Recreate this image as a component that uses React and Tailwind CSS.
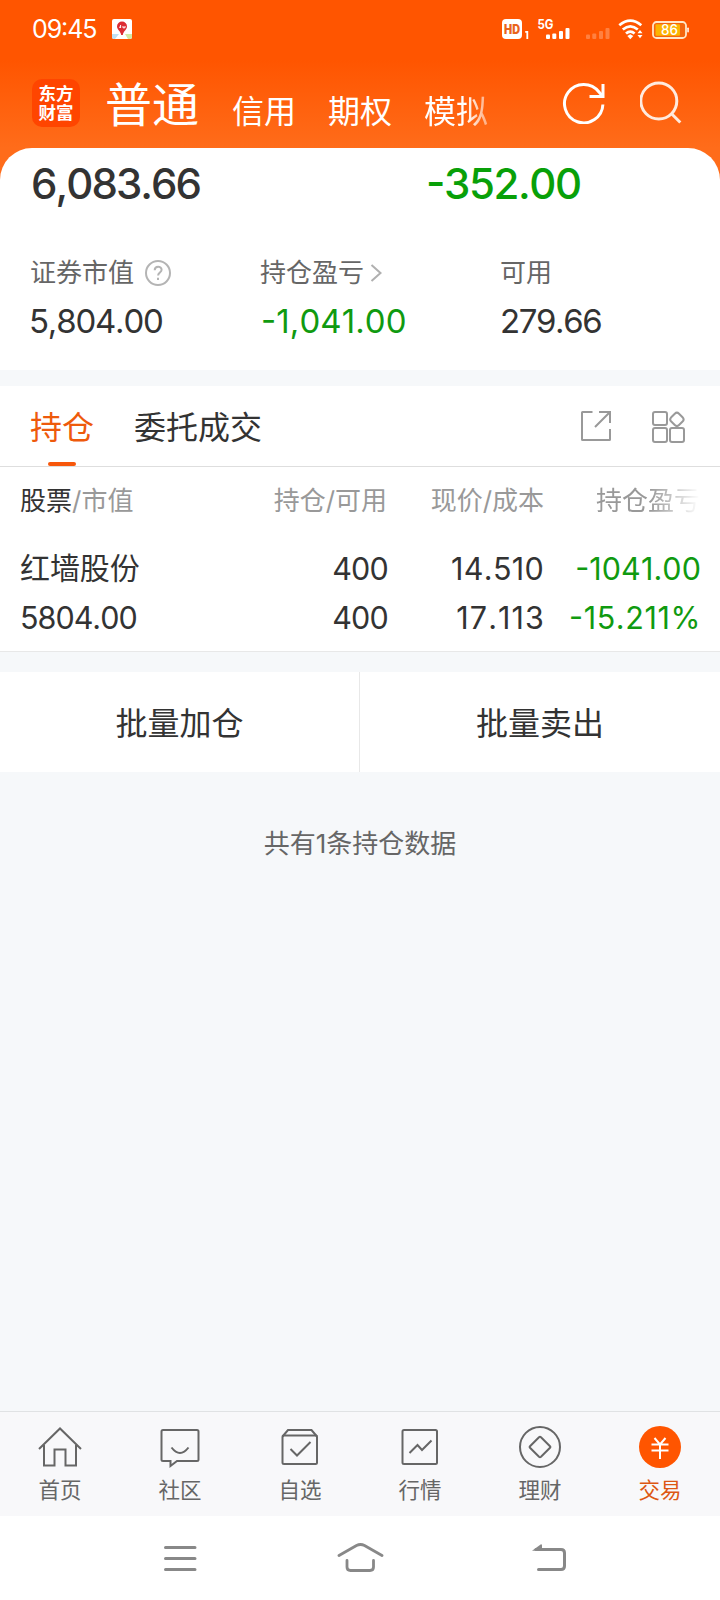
import React from "react";

function StatusBar() {
  return (
    <div className="flex h-[58px] items-center pl-8 pr-[31px] text-white">
      <span className="w-[66px] text-[25px] leading-none tracking-[-1.100px] whitespace-nowrap">09:45</span>
      <svg className="ml-[14px]" width="20" height="20" viewBox="0 0 20 20">
        <rect width="20" height="20" rx="2" fill="#fff" />
        <path d="M0 15h7l-4 5H2a2 2 0 0 1-2-2z" fill="#bfe0f3" />
        <path d="M13 15h7v3a2 2 0 0 1-2 2h-2z" fill="#d3e7a4" />
        <path d="M10 2.500a5 5 0 0 1 5 5c0 3-3.600 4.500-4.200 8.500H9.200C8.600 12 5 10.500 5 7.500a5 5 0 0 1 5-5z" fill="#dc2c33" />
        <path d="M8.600 6v3M7 8.200h1.500M11 7v1.800h2V7" stroke="#fff" strokeWidth="1" fill="none" />
      </svg>
      <div className="flex-1" />
      <svg width="188" height="24" viewBox="0 0 188 24" fill="#fff">
        <rect x="1" y="2" width="20" height="20" rx="4" />
        <text x="11" y="16.500" fontSize="12.500" fontWeight="900" fill="#e9641c" textAnchor="middle" textLength="16" lengthAdjust="spacingAndGlyphs">HD</text>
        <path d="M24.200 14h3v8h-1.800v-6.300h-1.200z" />
        <text x="36.500" y="11.500" fontSize="12.500" fontWeight="700" textLength="16" lengthAdjust="spacingAndGlyphs">5G</text>
        <rect x="45" y="17.500" width="4" height="4.500" rx="1" />
        <rect x="51.300" y="16.500" width="4" height="5.500" rx="1" />
        <rect x="58" y="14" width="4" height="8" rx="1" />
        <rect x="64.500" y="11" width="4" height="11" rx="1" />
        <g opacity=".25">
          <rect x="85" y="17.500" width="4" height="4.500" rx="1" />
          <rect x="91.300" y="16.500" width="4" height="5.500" rx="1" />
          <rect x="98" y="14" width="4" height="8" rx="1" />
          <rect x="104.500" y="11" width="4" height="11" rx="1" />
        </g>
        <g fill="none" stroke="#fff" strokeWidth="2.700">
          <path d="M118.300 8.300q11-9.400 22 0" />
          <path d="M121.800 12.600q7.500-6.600 15 0" />
          <path d="M125 16.600q4.300-3.800 8.600 0" />
        </g>
        <path d="M129.300 17.200l3 1.800-3 3.200-3-3.200z" />
        <path d="M139 13l2.500 3.300h-5zM139 21.300l2.500-3.300h-5z" />
        <rect x="152" y="5" width="33" height="16" rx="3.500" fill="#f4660f" stroke="#ffe6c8" strokeWidth="1.800" />
        <rect x="154.500" y="7.300" width="24.500" height="11.500" rx="1" fill="#fdb400" />
        <rect x="186.300" y="10.500" width="1.500" height="5" rx=".7" />
        <text x="168.500" y="18" fontSize="14" fontWeight="500" textAnchor="middle" textLength="17" lengthAdjust="spacingAndGlyphs">86</text>
      </svg>
    </div>
  );
}

function Header() {
  return (
    <header className="h-[190px] shrink-0 bg-[linear-gradient(#ff5500_60px,#ff6c1a_148px)]">
      <StatusBar />
      <div className="flex h-[90px] items-start pl-8 text-white">
        <div className="mt-[21px] flex size-12 flex-col items-center justify-center rounded-[10px] bg-[#ff4500] text-[17.500px] font-bold leading-[19px]">
          <span>东方</span>
          <span>财富</span>
        </div>
        <span className="ml-[25px] mt-[17px] w-[96px] text-[47px] leading-[60px]">普通</span>
        <span className="ml-[31px] mt-[34px] w-16 text-[32px] leading-10">信用</span>
        <span className="ml-8 mt-[34px] w-16 text-[32px] leading-10">期权</span>
        <span className="ml-8 mt-[34px] w-16 text-[32px] leading-10 [mask-image:linear-gradient(to_right,black_65%,rgba(0,0,0,.45))]">模拟</span>
        <svg className="ml-[74px] mt-[22px]" width="44" height="44" viewBox="0 0 44 44" fill="none" stroke="#fff" strokeWidth="3">
          <path d="M40.900 24.500A19.200 19.200 0 1 1 37 12L40.500 16" />
          <path d="M41 4v12.500H27.500" />
        </svg>
        <svg className="ml-[34px] mt-[22px]" width="44" height="44" viewBox="-1 0 44 44" fill="none" stroke="#ffeade" strokeWidth="3">
          <circle cx="17.800" cy="21" r="18" />
          <path d="M30.300 33.500l9 9" />
        </svg>
      </div>
    </header>
  );
}

function Summary() {
  return (
    <section className="-mt-[42px] h-[222px] shrink-0 rounded-t-[32px] bg-white">
      <div className="flex pl-[31px] pt-[11px] text-[42px] font-medium leading-[50px]">
        <span className="w-[395px] tracking-[-1.950px]">6,083.66</span>
        <span className="tracking-[-1.400px] text-[#08a008]">-352.00</span>
      </div>
      <div className="mt-11 flex pl-[30px] text-[26px] leading-10 text-[#666]">
        <div className="flex w-[230px] items-center">
          证券市值
          <svg className="-mt-px ml-[11px]" width="26" height="26" viewBox="0 0 26 26" fill="none" stroke="#b4b4b4" strokeWidth="2">
            <circle cx="13" cy="13" r="12" />
            <path d="M9.700 10.200c0-4.600 6.900-4.500 6.900-.4 0 2.700-3.500 2.900-3.500 5.800" />
            <path d="M13 17.800v2.200" />
          </svg>
        </div>
        <div className="flex w-[240px] items-center">
          持仓盈亏
          <svg className="-mt-px ml-[6px]" width="12" height="18" viewBox="0 0 12 18" fill="none" stroke="#b0b0b0" strokeWidth="2">
            <path d="M1.500 1l9 8-9 8" />
          </svg>
        </div>
        <div>可用</div>
      </div>
      <div className="mt-2 flex pl-[29px] text-[33px] leading-10 text-[#333]">
        <span className="w-[232px] tracking-[-1.200px]">5,804.00</span>
        <span className="w-[239px] tracking-[0.100px] text-[#109a10]">-1,041.00</span>
        <span className="tracking-[-1.400px]">279.66</span>
      </div>
    </section>
  );
}

function Tabs() {
  return (
    <div className="mt-4 flex h-[81px] shrink-0 border-b border-[#dedede] bg-white pl-[30px] pr-[34px] text-[32px] leading-[84px]">
      <div className="flex w-[64px] flex-col items-center text-[#ee5a0c]">
        <span className="h-[76px]">持仓</span>
        <span className="h-1 w-7 rounded-sm bg-[#f7570b]" />
      </div>
      <span className="ml-10 flex-1 text-[#333]">委托成交</span>
      <svg className="mt-6" width="32" height="32" viewBox="0 0 32 32" fill="none" stroke="#999" strokeWidth="2">
        <path d="M12.500 2H2.500Q2 2 2 2.500v27Q2 30 2.500 30h27q.5 0 .5-.5V19M19 2h11v11M30 2L15 17" />
      </svg>
      <svg className="ml-[38px] mt-6" width="36" height="34" viewBox="0 0 36 34" fill="none" stroke="#999" strokeWidth="2">
        <rect x="3" y="2" width="14" height="13" rx="2" />
        <rect x="3" y="18" width="14" height="14" rx="2" />
        <rect x="20" y="18" width="14" height="14" rx="2" />
        <rect x="21.400" y="3.900" width="11" height="11" rx="3" transform="rotate(45 26.900 9.400)" />
      </svg>
    </div>
  );
}

const grid = "grid grid-cols-[200px_168px_156px_156px] pl-5 pr-5";

function Holdings() {
  return (
    <div className="h-[185px] shrink-0 border-b border-[#e8e8e8] bg-white">
      <div className={`${grid} h-[66px] text-right text-[26px] leading-[68px] text-[#999]`}>
        <span className="text-left"><span className="text-[#333]">股票</span>/市值</span>
        <span className="pr-px">持仓/可用</span>
        <span>现价/成本</span>
        <span className="[mask-image:linear-gradient(to_right,black_68%,transparent)]">持仓盈亏</span>
      </div>
      <div className={`${grid} mt-[10px] h-[49px] text-right text-[30.500px] leading-[51px] text-[#333]`}>
        <span className="text-left text-[30px] tracking-[-0.100px]">红墙股份</span>
        <span className="tracking-[-0.800px]">400</span>
        <span className="-mr-px pr-px tracking-[0.300px]">14.510</span>
        <span className="-mr-px tracking-[0.100px] text-[#109a10]">-1041.00</span>
      </div>
      <div className={`${grid} h-[49px] text-right text-[30.500px] leading-[51px] text-[#333]`}>
        <span className="text-left tracking-[-1px]">5804.00</span>
        <span className="tracking-[-0.800px]">400</span>
        <span className="-mr-px tracking-[1.100px]">17.113</span>
        <span className="-mr-px tracking-[0.600px] text-[#109a10]">-15.211%</span>
      </div>
    </div>
  );
}

const icons = {
  home: <path d="M2 23L23 2.500 44 23M7 19v20.500h10.500v-16h11v16H39V19" />,
  chat: (
    <>
      <path d="M6 4h34q1.500 0 1.500 1.500v28q0 1.500-1.500 1.500H20l-6.500 5V35H6q-1.500 0-1.500-1.500v-28Q4.500 4 6 4z" />
      <path d="M14.500 21.500q8.500 11 17 0" />
    </>
  ),
  check: (
    <>
      <rect x="5.500" y="9.500" width="34.500" height="28.500" rx="1.500" />
      <path d="M5.500 10.500L11 4h23.500l5.500 6.500M13.500 23l6.500 6.500 13.500-13.500" />
    </>
  ),
  market: (
    <>
      <rect x="5.500" y="4" width="34.500" height="34" rx="1.500" />
      <path d="M12.500 27l8-8 4.500 5 9.500-9.500" />
    </>
  ),
  wealth: (
    <>
      <circle cx="23" cy="21" r="20" />
      <path d="M22 11.200l-9 9q-.8.800 0 1.600l9 9q1 .8 2 0l9-9q.8-.8 0-1.600l-9-9q-1-.8-2 0z" />
    </>
  ),
  trade: (
    <>
      <circle cx="23" cy="21" r="21" fill="#ff5500" stroke="none" />
      <path d="M17.500 12l5.500 6.500 5.500-6.500M14.500 18.500h17M14.500 24.500h17M23 18.500V33" stroke="#fff" />
    </>
  ),
};

const items = [
  ["home", "首页"],
  ["chat", "社区"],
  ["check", "自选"],
  ["market", "行情"],
  ["wealth", "理财"],
  ["trade", "交易"],
];

function TabBar() {
  return (
    <nav className="grid h-[105px] shrink-0 grid-cols-6 border-t border-[#e0e2e4] bg-[#f8f8fa] text-[#666]">
      {items.map(([key, label]) => (
        <div key={key} className="flex flex-col items-center pt-[14px]">
          <svg width="46" height="44" viewBox="0 0 46 44" fill="none" stroke="#666" strokeWidth="2">
            {icons[key]}
          </svg>
          <span className={`mt-[6px] text-[21.500px] leading-7 ${key === "trade" ? "text-[#dd5713]" : ""}`}>{label}</span>
        </div>
      ))}
    </nav>
  );
}

function SystemNav() {
  return (
    <div className="flex h-[84px] shrink-0 items-center bg-white pl-[163px]">
      <svg width="35" height="28" viewBox="0 0 35 28" stroke="#888" strokeWidth="3" strokeLinecap="round">
        <path d="M2.500 3.500H32M2.500 14.500H32M2.500 25.500H32" />
      </svg>
      <svg className="ml-[138px]" width="50" height="32" viewBox="0 0 50 32" fill="none" stroke="#888" strokeWidth="2.800" strokeLinecap="round" strokeLinejoin="round">
        <path d="M3 13.500L20.500 3.500q4-2 8 0L46 13.500M11 18.500V25q0 3.500 3.500 3.500h19.500q3.500 0 3.500-3.500v-6.500" />
      </svg>
      <svg className="ml-[145px]" width="36" height="30" viewBox="0 0 36 30" fill="none" stroke="#888" strokeWidth="3" strokeLinecap="round">
        <path d="M5 6.500h25q3.500 0 3.500 3.500v13q0 3.500-3.500 3.500H7.500" />
        <path d="M1 7.800L10 1.200q1 0 1 1v5.600z" fill="#888" stroke="none" />
      </svg>
    </div>
  );
}

export default function App() {
  return (
    <div className="flex h-[1600px] w-[720px] flex-col overflow-hidden bg-[#f6f8fa] font-['Inter','Noto_Sans_CJK_SC',sans-serif] text-[#333] [font-feature-settings:'case','kern'_0,'calt'_0]">
      <Header />
      <Summary />
      <Tabs />
      <Holdings />
      <div className="mt-5 grid h-[100px] shrink-0 grid-cols-2 bg-white text-center text-[32px] leading-[104px]">
        <span className="h-[100px] border-r border-[#e8e8e8]">批量加仓</span>
        <span>批量卖出</span>
      </div>
      <p className="flex-1 pt-[52px] text-center text-[26px] leading-10 text-[#666]">共有1条持仓数据</p>
      <TabBar />
      <SystemNav />
    </div>
  );
}
